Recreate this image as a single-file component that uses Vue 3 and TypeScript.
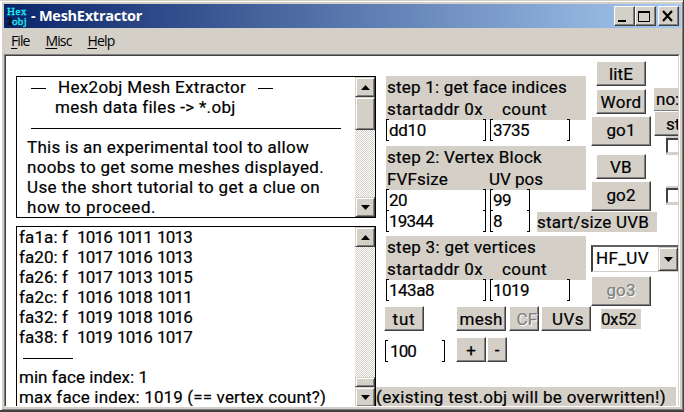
<script setup lang="ts">
import type { Directive } from 'vue'

// Spreads the letters of a label so that it takes the advance width given, in pixels.
const vFit: Directive<HTMLElement, number> = {
  mounted(el, binding) {
    const natural = el.getBoundingClientRect().width
    const count = (el.textContent ?? '').length
    if (count > 0) el.style.letterSpacing = `${(binding.value - natural) / count}px`
  },
}

interface Label { text: string; w: number }
interface Panel { title: Label; left: Label; right: Label; gap: number; rows: { a: Label; b: Label; short: boolean; note?: Label }[] }

const menu = [
  { key: 'F', rest: 'ile', w: 18.5 },
  { key: 'M', rest: 'isc', w: 26 },
  { key: 'H', rest: 'elp', w: 27 },
]
const intro: Label[] = [
  { text: 'This is an experimental tool to allow', w: 282 },
  { text: 'noobs to get some meshes displayed.', w: 297 },
  { text: 'Use the short tutorial to get a clue on', w: 293 },
  { text: 'how to proceed.', w: 129 },
]
const faces = [
  { addr: 'fa1a: f', nums: '1016 1011 1013' },
  { addr: 'fa20: f', nums: '1017 1016 1013' },
  { addr: 'fa26: f', nums: '1017 1013 1015' },
  { addr: 'fa2c: f', nums: '1016 1018 1011' },
  { addr: 'fa32: f', nums: '1019 1018 1016' },
  { addr: 'fa38: f', nums: '1019 1016 1017' },
]
const panels: Panel[] = [
  {
    title: { text: 'step 1: get face indices', w: 180 },
    left: { text: 'startaddr 0x', w: 96 }, right: { text: 'count', w: 45 }, gap: 115,
    rows: [{ a: { text: 'dd10', w: 37 }, b: { text: '3735', w: 36 }, short: false }],
  },
  {
    title: { text: 'step 2: Vertex Block', w: 155 },
    left: { text: 'FVFsize', w: 61 }, right: { text: 'UV pos', w: 54 }, gap: 102,
    rows: [
      { a: { text: '20', w: 18 }, b: { text: '99', w: 18 }, short: true },
      { a: { text: '19344', w: 44 }, b: { text: '8', w: 9 }, short: true, note: { text: 'start/size UVB', w: 112 } },
    ],
  },
  {
    title: { text: 'step 3: get vertices', w: 149 },
    left: { text: 'startaddr 0x', w: 96 }, right: { text: 'count', w: 45 }, gap: 115,
    rows: [{ a: { text: '143a8', w: 45 }, b: { text: '1019', w: 36 }, short: false }],
  },
]
</script>

<template>
  <div class="window">
    <header class="titlebar">
      <div class="logo">
        <div class="lrow"><span v-fit="20">Hex</span></div>
        <div class="lrow"><b>2</b><span v-fit="15">obj</span></div>
      </div>
      <span class="caption"><span v-fit="111">- MeshExtractor</span></span>
      <div class="winbtns">
        <span class="wb"><svg width="19" height="17"><rect x="3" y="13" width="8" height="2" /></svg></span>
        <span class="wb"><svg width="19" height="17"><path d="M2.5 4V14.5H13.5V4" fill="none" stroke="#000" /><rect x="2" y="4" width="12" height="2" /></svg></span>
        <span class="wb close"><svg width="19" height="17"><path d="M4 4L13 14M13 4L4 14" fill="none" stroke="#000" stroke-width="2.2" /></svg></span>
      </div>
    </header>
    <nav class="menubar">
      <span v-for="m in menu" :key="m.key" v-fit="m.w" class="item"><u>{{ m.key }}</u>{{ m.rest }}</span>
    </nav>
    <div class="frame">
      <main class="client">
        <section class="memos">
          <div class="memo top">
            <div class="text">
              <div class="line head1"><i class="dash"></i><span v-fit="188">Hex2obj Mesh Extractor</span><i class="dash"></i></div>
              <div class="line head2"><span v-fit="180">mesh data files -&gt; *.obj</span></div>
              <div class="line"><i class="rule"></i></div>
              <div v-for="l in intro" :key="l.text" class="line para"><span v-fit="l.w">{{ l.text }}</span></div>
            </div>
            <div class="scroll">
              <span class="sb"><svg width="9" height="5"><path d="M0 5L4.5 0L9 5Z" /></svg></span>
              <span class="thumb big"></span>
              <span class="track"></span>
              <span class="sb"><svg width="9" height="5"><path d="M0 0L4.5 5L9 0Z" /></svg></span>
            </div>
          </div>
          <div class="memo bottom">
            <div class="text">
              <div v-for="f in faces" :key="f.addr" class="line face">
                <span class="addr"><span v-fit="49">{{ f.addr }}</span></span><span v-fit="115" class="nums">{{ f.nums }}</span>
              </div>
              <div class="line"><i class="rule short-rule"></i></div>
              <div class="line out"><span v-fit="129">min face index: 1</span></div>
              <div class="line out"><span v-fit="307">max face index: 1019 (== vertex count?)</span></div>
            </div>
            <div class="scroll">
              <span class="sb"><svg width="9" height="5"><path d="M0 5L4.5 0L9 5Z" /></svg></span>
              <span class="track"></span>
              <span class="thumb tiny"></span>
              <span class="sb"><svg width="9" height="5"><path d="M0 0L4.5 5L9 0Z" /></svg></span>
            </div>
          </div>
        </section>

        <section class="work">
          <div class="upper">
            <div class="steps">
              <div v-for="p in panels" :key="p.title.text" class="step">
                <div class="panel">
                  <div class="pl"><span v-fit="p.title.w">{{ p.title.text }}</span></div>
                  <div class="pl" :style="{ gridTemplateColumns: p.gap + 'px auto' }">
                    <span class="cell"><span v-fit="p.left.w">{{ p.left.text }}</span></span><span class="cell"><span v-fit="p.right.w">{{ p.right.text }}</span></span>
                  </div>
                </div>
                <div v-for="r in p.rows" :key="r.a.text" class="fields">
                  <div class="field wide"><span v-fit="r.a.w">{{ r.a.text }}</span></div>
                  <div class="field" :class="{ short: r.short }"><span v-fit="r.b.w">{{ r.b.text }}</span></div>
                  <div v-if="r.note" class="note"><span v-fit="r.note.w">{{ r.note.text }}</span></div>
                </div>
              </div>
            </div>
            <div class="actions">
              <button class="btn small"><span v-fit="24">litE</span></button>
              <button class="btn small word"><span v-fit="41">Word</span></button>
              <button class="btn go g1"><span v-fit="29">go1</span></button>
              <button class="btn small vb"><span v-fit="22">VB</span></button>
              <button class="btn go g2"><span v-fit="29">go2</span></button>
              <div class="combo">
                <span class="value"><span v-fit="53">HF_UV</span></span>
                <span class="drop"><svg width="9" height="5"><path d="M0 0L4.5 5L9 0Z" /></svg></span>
              </div>
              <button class="btn go g3 off"><span v-fit="29">go3</span></button>
            </div>
            <div class="edge">
              <div class="no"><span>no:</span></div>
              <button class="btn st"><span>st</span></button>
              <div class="check"><i></i></div>
              <div class="check second"><i></i></div>
            </div>
          </div>
          <div class="tools">
            <button class="btn tut"><span v-fit="23">tut</span></button>
            <button class="btn mesh"><span v-fit="43">mesh</span></button>
            <button class="btn cf off"><span v-fit="21">CF</span></button>
            <button class="btn uvs"><span v-fit="32">UVs</span></button>
            <div class="hex"><span v-fit="35">0x52</span></div>
          </div>
          <div class="zoomrow">
            <div class="field scale"><span v-fit="26">100</span></div>
            <button class="btn plus"><span>+</span></button>
            <button class="btn minus"><span>-</span></button>
          </div>
          <div class="status"><span v-fit="290">(existing test.obj will be overwritten!)</span></div>
        </section>
      </main>
    </div>
  </div>
</template>

<style>
body { overflow: hidden; }
</style>

<style scoped>
* { box-sizing: border-box; }
.window {
  width: 684px; height: 412px; background: #d4d0c8; display: flex; flex-direction: column;
  padding: 2px 0 0 2px; overflow: hidden; white-space: nowrap;
  border-right: 1px solid #404040; border-bottom: 2px solid #404040;
  box-shadow: inset 0 1px #d4d0c8, inset 1px 1px 0 1px #fff, inset -1px -1px #808080;
  font: 17px/20px Roboto, "Liberation Sans", sans-serif; color: #000;
}
.titlebar {
  flex: none; height: 24px; margin: 2px 2px 0 2px; padding-left: 2px; display: flex; align-items: center;
  background: linear-gradient(90deg, #0a246a, #a6caf0);
}
.logo { flex: none; width: 20px; height: 20px; margin-left: 1px; font: 11px/10px "Liberation Serif", serif; color: #1ff3f3; -webkit-text-stroke: .3px #1ff3f3; }
.lrow { display: flex; height: 10px; }
.lrow b { width: 5px; color: #111; -webkit-text-stroke: .5px #111; }
.caption { margin-left: 4px; flex: 1; color: #fff; font: bold 14.5px/22px "Open Sans", sans-serif; }
.winbtns { display: flex; margin-right: 2px; }
.wb { width: 21px; height: 20px; background: #d4d0c8; border: 1px solid #fff; border-right-color: #404040; border-bottom-color: #404040; box-shadow: inset -1px -1px #808080; }
.wb svg { display: block; }
.close { margin-left: 2px; }
.menubar { flex: none; height: 26px; padding: 2px 0 0 9px; display: flex; gap: 16px; font: 14px/22px "Open Sans", sans-serif; }
.item u { text-underline-offset: 2px; text-decoration-thickness: 1px; }
.frame {
  margin: 0 1px 0 2px; width: 676px; height: 353px; border-top: 1px solid #808080; border-left: 1px solid #808080;
  border-bottom: 1px solid #fff; border-right: 1px solid #fff;
}
.client {
  height: 351px; border-top: 1px solid #404040; border-left: 1px solid #404040; border-right: 1px solid #d4d0c8;
  background: #fff; overflow: hidden; display: flex; padding-left: 10px; -webkit-text-stroke-width: .2px;
}
.memos { flex: none; width: 360px; padding-top: 20px; display: flex; flex-direction: column; gap: 8px; }
.memo { flex: none; border: 1px solid #000; display: flex; overflow: hidden; }
.memo .text { flex: 1; min-width: 0; }
.top { height: 142px; }
.bottom { height: 181px; border-bottom: 0; }
.line { height: 20px; line-height: 21px; display: flex; align-items: center; }
.head1 { padding-left: 14px; gap: 12px; }
.head2 { padding-left: 38px; }
.dash { width: 15px; height: 1px; background: #000; margin-top: 3px; }
.rule { width: 310px; height: 1px; background: #000; margin: 3px 0 0 14px; }
.short-rule { width: 50px; margin-left: 6px; }
.para { padding-left: 10px; }
.face { padding-left: 2px; }
.addr { width: 58px; }
.nums { word-spacing: 1.5px; }
.out { padding-left: 2px; }
.scroll { flex: none; width: 20px; display: flex; flex-direction: column; }
.sb, .thumb, .drop {
  flex: none; background: #d4d0c8; border: 1px solid #d4d0c8; border-right-color: #404040; border-bottom-color: #404040;
  box-shadow: inset 1px 1px #fff, inset -1px -1px #808080;
}
.sb { height: 20px; display: flex; align-items: center; justify-content: center; }
.big { height: 33px; }
.tiny { height: 10px; }
.track { flex: 1; background: repeating-conic-gradient(#d4d0c8 0 25%, #fff 0 50%) 0 0 / 2px 2px; }

.work { flex: none; width: 304px; display: flex; flex-direction: column; }
.upper { height: 250px; display: flex; }
.steps { flex: none; width: 215px; padding: 20px 0 0 10px; display: flex; flex-direction: column; }
.step { margin-bottom: 6px; }
.step:nth-child(2) { margin-bottom: 5px; }
.panel { width: 200px; height: 44px; background: #d4d0c8; padding-left: 1px; }
.pl { height: 22px; line-height: 22px; display: grid; justify-content: start; }
.fields { display: flex; height: 20px; gap: 4px; }
.fields + .fields { margin-top: 1px; }
.field { flex: none; width: 80px; height: 20px; display: flex; align-items: center; line-height: 20px; background: #fff; }
.field::before, .field::after { content: ""; width: 2px; height: 20px; border: 1px solid #000; border-right: 0; }
.field::after { margin-left: auto; border-right: 1px solid #000; border-left: 0; }
.field.wide { width: 100px; }
.field.short { width: 40px; }
.note { flex: none; width: 120px; height: 20px; margin: 1px 0 0 3px; background: #d4d0c8; line-height: 20px; z-index: 1; }
.actions { flex: none; width: 63px; padding-top: 5px; display: flex; flex-direction: column; align-items: flex-start; }
.btn {
  flex: none; padding: 0; margin: 0; font: inherit; color: #000; background: #d4d0c8; border: 1px solid #fff;
  border-right-color: #404040; border-bottom-color: #404040; box-shadow: inset -1px -1px #808080;
  display: flex; align-items: center; justify-content: center; white-space: nowrap; overflow: hidden;
}
.small { width: 50px; height: 25px; margin-left: 5px; }
.word { margin-top: 3px; }
.go { width: 60px; height: 30px; padding-bottom: 2px; }
.g1 { margin-top: 2px; }
.vb { margin-top: 8px; }
.g2 { margin-top: 2px; }
.off { color: #808080; text-shadow: 1px 1px #fff; }
.combo {
  flex: none; width: 88px; height: 27px; margin-top: 34px; padding: 0; display: flex; background: #fff;
  border: 2px solid #404040; border-top-color: #606060; border-bottom: 1px solid #d4d0c8; border-right: 1px solid #808080;
}
.value { flex: 1; padding-left: 3px; line-height: 23px; }
.drop { width: 20px; display: flex; align-items: center; justify-content: center; }
.g3 { margin-top: 4px; }
.edge { width: 26px; padding-top: 32px; overflow: hidden; }
.no { height: 23px; width: 40px; background: #d4d0c8; padding-left: 2px; line-height: 23px; border-bottom: 1px solid #808080; }
.edge .btn { width: 60px; height: 25px; justify-content: flex-start; padding-left: 11px; }
.check { width: 20px; height: 19px; margin-left: 12px; background: #d4d0c8; padding: 2px 0 2px; }
.check i { display: block; height: 15px; background: #fff; border: 2px solid #404040; border-right: 0; border-bottom: 1px solid #d4d0c8; }
.second { margin-top: 31px; }
.tools { flex: none; display: flex; height: 25px; padding-left: 8px; }
.tut { width: 40px; }
.mesh { width: 50px; margin-left: 32px; }
.cf { width: 30px; margin-left: 3px; padding-left: 6px; }
.uvs { width: 50px; margin-left: 2px; padding-left: 4px; }
.hex { width: 40px; height: 20px; background: #d4d0c8; margin: 3px 0 0 10px; }
.zoomrow { flex: none; display: flex; height: 25px; margin: 6px 0 0 9px; }
.scale { width: 60px; margin-top: 4px; }
.scale span { margin-left: 2px; }
.plus { width: 30px; margin-left: 11px; }
.minus { width: 20px; margin-left: 1px; }
.status { flex: none; width: 300px; height: 20px; margin-top: 25px; background: #d4d0c8; line-height: 20px; }
</style>
